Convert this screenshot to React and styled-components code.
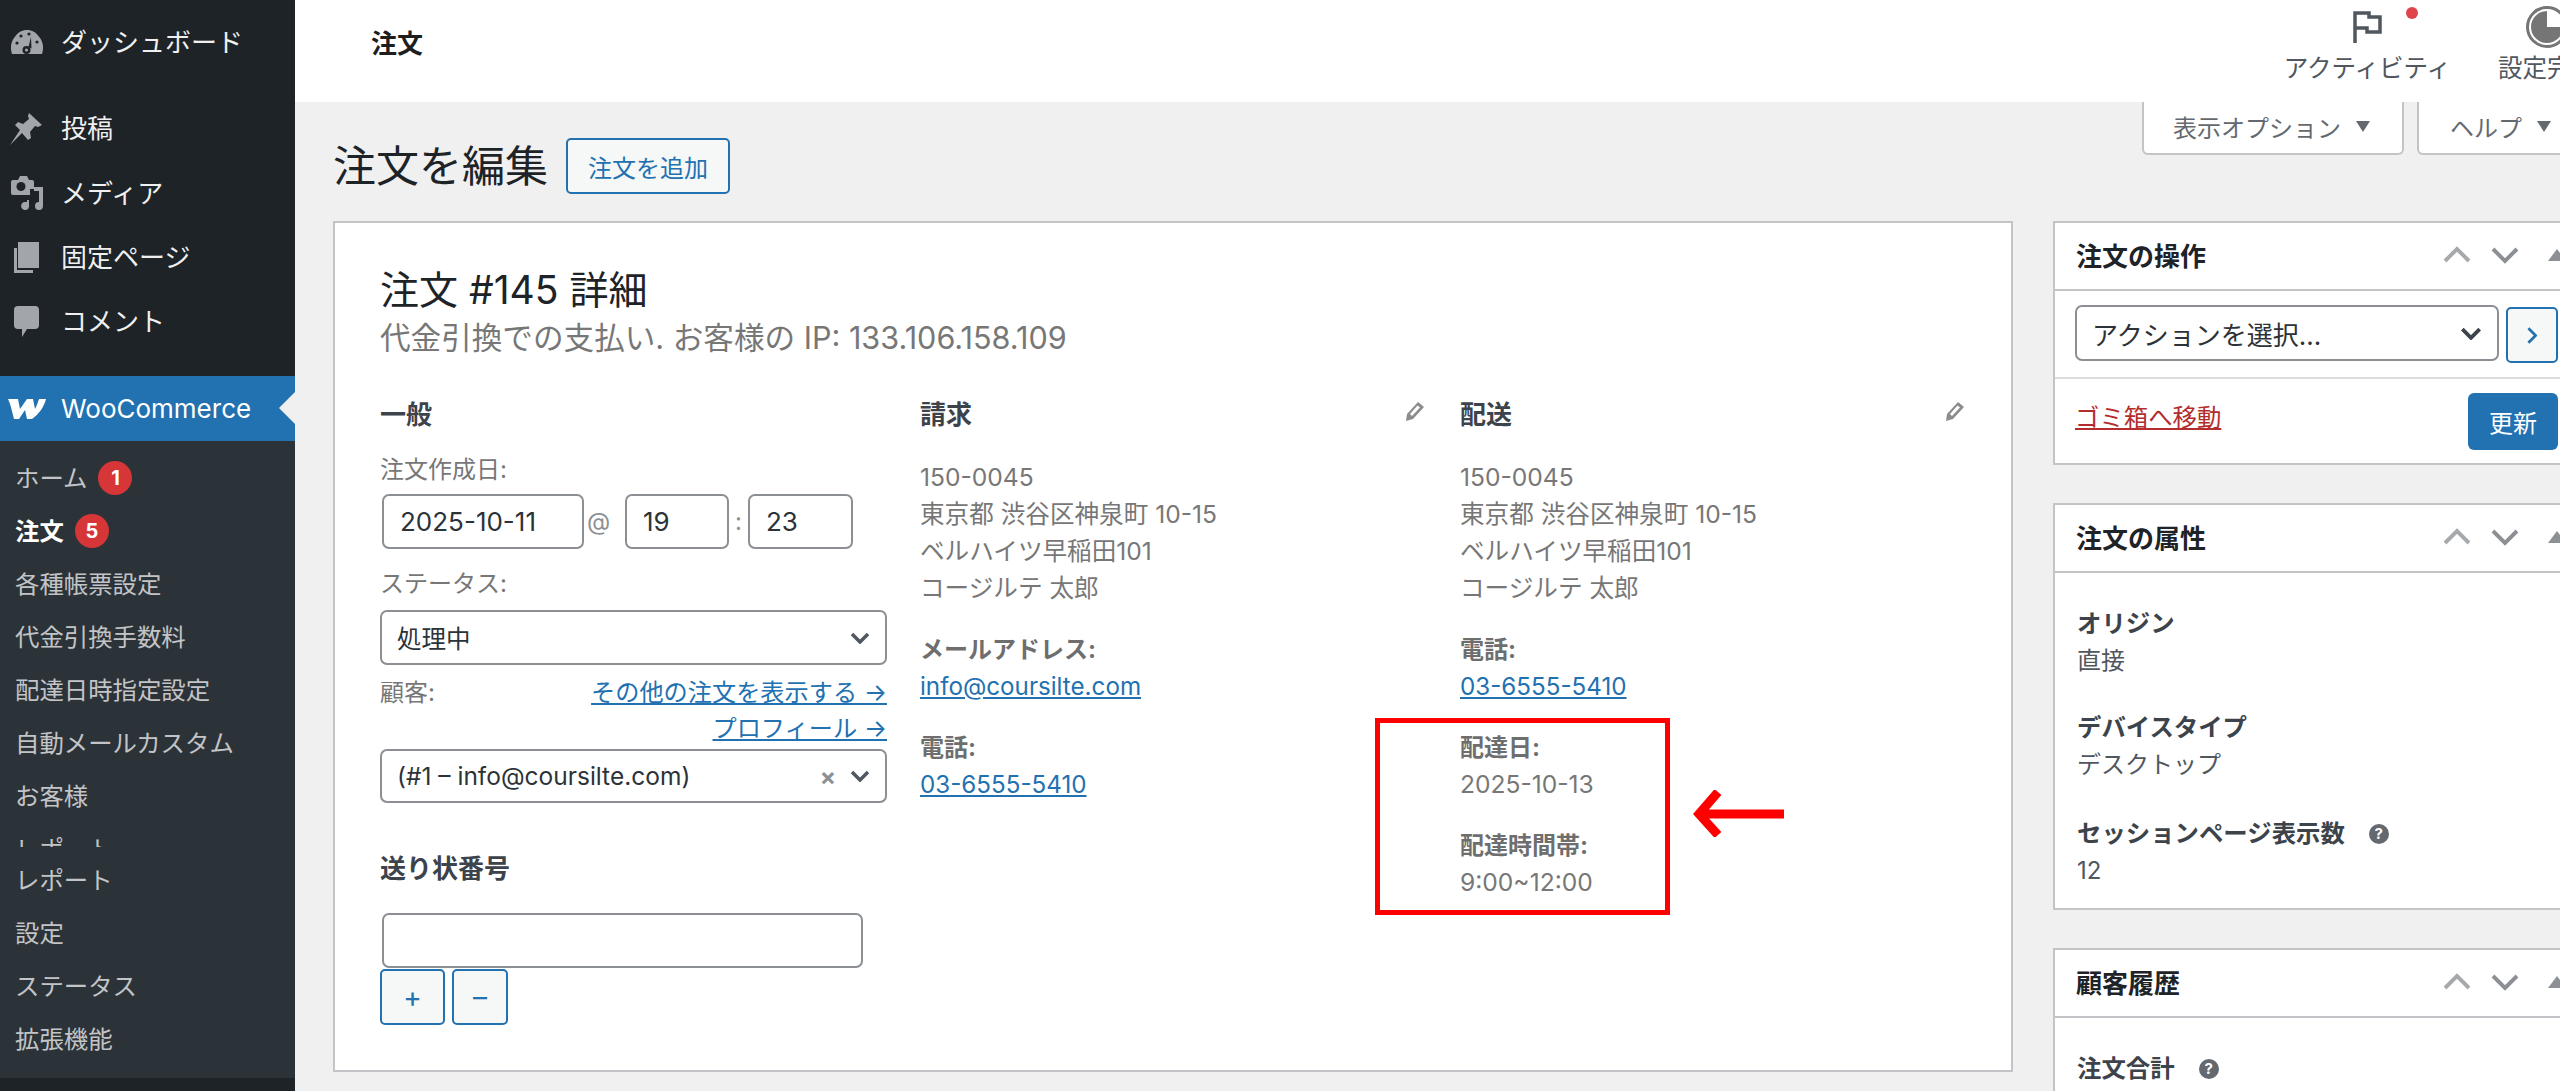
import React from 'react';
import styled, { createGlobalStyle } from 'styled-components';

const GlobalStyle = createGlobalStyle`
  html, body {
    margin: 0;
    padding: 0;
    background: #f0f0f1;
    overflow: hidden;
  }
  body, input, button {
    font-family: Inter, "Noto Sans CJK JP", sans-serif;
  }
  * { box-sizing: border-box; }
`;

const Page = styled.div`
  display: flex;
  width: 2560px;
  height: 1091px;
  overflow: hidden;
  background: #f0f0f1;
`;

/* ---------- admin menu ---------- */
const Sidebar = styled.nav`
  flex: 0 0 295px;
  display: flex;
  flex-direction: column;
  padding-top: 10px;
  background: #1d2327;
`;

const MenuRow = styled.div`
  position: relative;
  display: flex;
  align-items: center;
  flex: 0 0 64.3px;
  margin-bottom: ${({ $gap }) => $gap || 0}px;
  font-size: 26px;
  color: ${({ $active }) => ($active ? '#fff' : '#f0f0f1')};
  background: ${({ $active }) => ($active ? '#2271b1' : 'transparent')};

  ${({ $active }) => $active && `
    &::after {
      content: '';
      position: absolute;
      right: 0;
      top: 16px;
      border: 16px solid transparent;
      border-left: 0;
      border-right-color: #f0f0f1;
    }
  `}
`;

const MenuIcon = styled.span`
  flex: 0 0 61px;
  display: flex;
  justify-content: center;
  padding-right: 8px;
`;

const MenuLabel = styled.span`
  padding-bottom: ${({ $up }) => $up || 3}px;
`;

const SubMenu = styled.div`
  display: flex;
  flex-direction: column;
  height: 637px;
  padding-top: 11px;
  background: #2c3338;
`;

const SubRow = styled.div`
  display: flex;
  align-items: center;
  flex: 0 0 ${({ $clip }) => ($clip ? '24px' : '53px')};
  margin-bottom: ${({ $clip }) => ($clip ? '7px' : '0')};
  overflow: hidden;
  align-self: stretch;
  padding-left: 15px;
  font-size: 24.4px;
  line-height: 53px;
  font-weight: ${({ $bold }) => ($bold ? 700 : 400)};
  color: ${({ $bold }) => ($bold ? '#fff' : '#c3c4c7')};
  ${({ $clip }) => $clip && 'align-items: flex-start;'}
`;

const Badge = styled.span`
  display: flex;
  align-items: center;
  justify-content: center;
  width: 34px;
  height: 34px;
  margin-left: 11px;
  border-radius: 50%;
  background: #d63638;
  color: #fff;
  font-size: 20px;
  font-weight: 700;
`;

/* ---------- top bar ---------- */
const Main = styled.div`
  flex: 1;
  min-width: 0;
  display: flex;
  flex-direction: column;
`;

const TopBar = styled.header`
  flex: 0 0 102px;
  display: flex;
  justify-content: space-between;
  background: #fff;
  padding-left: 76px;
`;

const PageName = styled.div`
  margin-top: 26px;
  font-size: 26px;
  line-height: 36px;
  font-weight: 700;
  color: #1e1e1e;
`;

const TopActions = styled.div`
  display: flex;
  gap: 47px;
  margin-right: -36px;
  padding-top: 6px;
`;

const TopAction = styled.div`
  display: flex;
  flex-direction: column;
  align-items: center;
  font-size: 24.5px;
  line-height: 36px;
  color: #50575e;
`;

const TopIcon = styled.div`
  position: relative;
  display: flex;
  align-items: center;
  justify-content: center;
  align-self: stretch;
  height: 42px;
  margin-bottom: 2px;
`;

const Dot = styled.span`
  position: absolute;
  left: 122px;
  top: 1px;
  width: 12px;
  height: 12px;
  border-radius: 50%;
  background: #e0434b;
`;

/* ---------- content ---------- */
const Content = styled.div`
  padding-left: 38px;
`;

const HeadRow = styled.div`
  display: flex;
  height: 119px;
`;

const TitleGroup = styled.div`
  display: flex;
  align-items: center;
  align-self: flex-start;
  margin-top: 36px;
  gap: 18px;
`;

const PageTitle = styled.h1`
  margin: 0;
  font-size: 43px;
  line-height: 56px;
  font-weight: 400;
  color: #1d2327;
`;

const OutlineButton = styled.button`
  display: flex;
  align-items: center;
  justify-content: center;
  width: ${({ $w }) => $w}px;
  height: ${({ $h }) => $h || 56}px;
  padding: 0;
  border: 2px solid #2271b1;
  border-radius: 5px;
  background: #f6f7f7;
  color: #2271b1;
  font-size: ${({ $size }) => $size || 24}px;
`;

const Tabs = styled.div`
  display: flex;
  align-self: flex-start;
  gap: 13px;
  margin-left: auto;
  margin-right: -10px;
`;

const Tab = styled.div`
  display: flex;
  align-items: center;
  width: ${({ $w }) => $w}px;
  height: 53px;
  padding: 0 0 3px ${({ $pad }) => $pad}px;
  gap: 15px;
  background: #fff;
  border: 2px solid #c3c4c7;
  border-top: 0;
  border-radius: 0 0 6px 6px;
  color: #646970;
  font-size: 24px;
`;

const TabCaret = styled.span`
  width: 0;
  height: 0;
  border-style: solid;
  border-width: 11px 7px 0;
  border-color: #646970 transparent transparent;
`;

const Columns = styled.div`
  display: grid;
  grid-template-columns: 1680px 540px;
  gap: 40px;
`;

const OrderCard = styled.section`
  height: 851px;
  padding: 42px 44px 0 45px;
  background: #fff;
  border: 2px solid #c3c4c7;
`;

const OrderTitle = styled.h2`
  margin: 0;
  font-size: 39px;
  line-height: 50px;
  font-weight: 400;
  color: #1d2327;
`;

const OrderMeta = styled.p`
  margin: 0;
  font-size: 30.6px;
  line-height: 46px;
  color: #777;
`;

const OrderGrid = styled.div`
  display: grid;
  grid-template-columns: repeat(3, 507px);
  gap: 33px;
  margin-top: 36px;
`;

const ColumnHead = styled.div`
  display: flex;
  justify-content: space-between;
  align-items: flex-start;
  font-size: 26px;
  line-height: 36px;
  font-weight: 700;
  color: #3c434a;
`;

const Pencil = styled.svg`
  margin: 5px 3px 0 0;
`;

const FieldLabel = styled.div`
  margin-top: ${({ $top }) => $top}px;
  font-size: 24px;
  line-height: 36px;
  color: #777;
`;

const DateRow = styled.div`
  display: flex;
  align-items: center;
  margin: 6px 0 0 2px;
  color: #8c8f94;
  font-size: 24px;
`;

const TextInput = styled.input`
  display: block;
  width: ${({ $w }) => $w}px;
  height: 55px;
  padding: 0 16px;
  border: 2px solid #8c8f94;
  border-radius: 7px;
  background: #fff;
  color: #2c3338;
  font-size: 26px;
`;

const DateSep = styled.span`
  width: ${({ $w }) => $w}px;
  padding-right: ${({ $pr }) => $pr || 0}px;
  text-align: center;
`;

const SelectBox = styled.div`
  display: flex;
  align-items: center;
  width: ${({ $w }) => ($w ? `${$w}px` : '100%')};
  height: ${({ $h }) => $h || 55}px;
  margin-top: ${({ $top }) => $top || 0}px;
  padding: 0 15px;
  gap: 14px;
  border: 2px solid #8c8f94;
  border-radius: 7px;
  background: #fff;
  color: #2c3338;
  font-size: ${({ $size }) => $size || 24.5}px;
`;

const SelectText = styled.span`
  flex: 1;
`;

const ClearMark = styled.span`
  color: #8c8f94;
  font-size: 24px;
  font-weight: 700;
`;

const CustomerRow = styled.div`
  display: flex;
  justify-content: space-between;
  margin-top: 10px;
  font-size: 24px;
  line-height: 36px;
  color: #777;
`;

const ProfileLinks = styled.div`
  display: flex;
  flex-direction: column;
  align-items: flex-end;
`;

const Link = styled.a`
  color: ${({ $danger }) => ($danger ? '#b32d2e' : '#2271b1')};
  text-decoration: underline;
  font-size: 24.2px;
  line-height: ${({ $line }) => $line || 36}px;
`;

const TrackingHead = styled.div`
  margin-top: 48px;
  font-size: 26px;
  line-height: 36px;
  font-weight: 700;
  color: #3c434a;
`;

const TrackingField = styled.div`
  margin: 26px 0 1px 2px;
`;

const ButtonRow = styled.div`
  display: flex;
  gap: 7px;
`;

const Address = styled.div`
  margin-top: 26px;
  font-size: 24.6px;
  line-height: 37px;
  color: #777;
`;

const InfoGroup = styled.div`
  margin-top: 24px;
  font-size: 24.6px;
  line-height: 37px;
  color: #777;
`;

const InfoLabel = styled.div`
  font-size: 24px;
  font-weight: 700;
  color: #6e6e6e;
`;

const Highlight = styled.div`
  position: relative;
`;

const RedBox = styled.div`
  position: absolute;
  left: -85px;
  top: -11px;
  width: 295px;
  height: 197px;
  border: 5px solid #f00;
`;

const RedArrow = styled.svg`
  position: absolute;
  left: 233px;
  top: 61px;
`;

/* ---------- side boxes ---------- */
const SideColumn = styled.aside`
  display: flex;
  flex-direction: column;
  gap: 38px;
`;

const SideBox = styled.section`
  background: #fff;
  border: 2px solid #c3c4c7;
`;

const SideHead = styled.div`
  display: flex;
  align-items: center;
  height: 68px;
  padding: 0 25px 4px 21px;
  border-bottom: 2px solid #c3c4c7;
  font-size: 26px;
  font-weight: 700;
  color: #1d2327;
`;

const HeadControls = styled.div`
  display: flex;
  align-items: center;
  margin-left: auto;
  padding-top: 2px;
`;

const ActionRow = styled.div`
  display: flex;
  gap: 7px;
  padding: 14px 0 14px 20px;
  border-bottom: 2px solid #dcdcde;
`;

const ApplyButton = styled(OutlineButton)`
  margin-top: 2px;
  background: #f6f7f7;
`;

const ActionFoot = styled.div`
  display: flex;
  justify-content: space-between;
  align-items: flex-start;
  padding: 14px 33px 13px 20px;
`;

const TrashLink = styled(Link)`
  margin-top: 6px;
  font-size: 24.4px;
`;

const UpdateButton = styled.button`
  width: 90px;
  height: 57px;
  padding: 0;
  border: 0;
  border-radius: 6px;
  background: #2271b1;
  color: #fff;
  font-size: 24px;
`;

const SideBody = styled.div`
  padding: 32px 22px 19px;
`;

const AttrLabel = styled.div`
  display: flex;
  align-items: center;
  gap: 24px;
  margin-top: ${({ $top }) => $top || 0}px;
  font-size: 24.4px;
  line-height: 37px;
  font-weight: 700;
  color: #3c434a;
`;

const AttrValue = styled.div`
  font-size: 24px;
  line-height: 37px;
  color: #50575e;
`;

const HelpTip = styled.span`
  display: flex;
  align-items: center;
  justify-content: center;
  width: 20px;
  height: 20px;
  border-radius: 50%;
  background: #646970;
  color: #fff;
  font-size: 15px;
  font-weight: 700;
`;

/* ---------- icons ---------- */
const grey = '#a2a6aa';

const DashboardIcon = () => (
  <svg width="32" height="26" viewBox="0 0 32 26">
    <path fill={grey} d="M1 25C-1 19 0 13 3 9 7 3 11 1 16 1s9 2 13 8c3 4 4 10 2 16z" />
    <g fill="#1d2327">
      <circle cx="6" cy="14" r="1.6" />
      <circle cx="10" cy="7" r="1.6" />
      <circle cx="18" cy="5" r="1.6" />
      <circle cx="26" cy="13" r="1.6" />
      <path d="M20 8l-2.500 10 3 1.500z" />
      <circle cx="15.500" cy="21" r="4" />
    </g>
    <circle cx="15.500" cy="21" r="1.600" fill={grey} />
  </svg>
);

const PinIcon = () => (
  <svg width="33" height="33" viewBox="0 0 33 33">
    <path fill={grey} d="M19 1l13 12-4 2-3-1-5 6 1 6-3 2-6-7L0 33l10-15-5-5 3-3 5 2 6-5-1-3z" />
  </svg>
);

const MediaIcon = () => (
  <svg width="34" height="35" viewBox="0 0 34 35">
    <path fill={grey} d="M3 5h5l2-4h7l2 4h3a2 2 0 0 1 2 2v7h-4v6H3a2 2 0 0 1-2-2V7a2 2 0 0 1 2-2z" />
    <circle cx="11" cy="11.500" r="4.500" fill="#1d2327" />
    <path fill={grey} d="M24 12h9v19a4 4 0 1 1-4-4V16h-5zM19 25v5a4 4 0 1 1-4-3h2v-2z" />
  </svg>
);

const PagesIcon = () => (
  <svg width="25" height="31" viewBox="0 0 25 31">
    <path fill={grey} d="M4 0h21v26H4zM0 6h3v22h16v3H0z" />
  </svg>
);

const CommentIcon = () => (
  <svg width="25" height="31" viewBox="0 0 25 31">
    <path fill={grey} d="M4 0h17a4 4 0 0 1 4 4v15a4 4 0 0 1-4 4h-8l-5 8v-8H4a4 4 0 0 1-4-4V4a4 4 0 0 1 4-4z" />
  </svg>
);

const WooIcon = () => (
  <svg width="38" height="21" viewBox="0 0 38 21">
    <path fill="#fff" d="M0 1h10l2 10L19 1h6l2 10c2-4 3-7 4-10h7c-2 8-7 15-14 20h-5l-2-9-6 9H6C4 14 3 7 0 1z" />
  </svg>
);

const FlagIcon = () => (
  <svg width="29" height="32" viewBox="0 0 29 32">
    <path fill="none" stroke="#50575e" strokeWidth="3.500" d="M2 32V2h14v4h11v15H14v-4H2" />
  </svg>
);

const ProgressIcon = () => (
  <svg width="42" height="42" viewBox="0 0 42 42">
    <circle cx="21" cy="21" r="19.500" fill="none" stroke="#757575" strokeWidth="3" />
    <path fill="#757575" d="M21 5v16h16a16 16 0 1 1-16-16z" />
  </svg>
);

const Chevron = ({ dir = 'down', color = '#50575e', w = 20, h = 12, sw = 3.5, style }) => (
  <svg width={w} height={h} viewBox="0 0 20 12" style={style}>
    <path
      fill="none"
      stroke={color}
      strokeWidth={sw}
      d={dir === 'down' ? 'M2 2l8 8 8-8' : 'M2 10l8-8 8 8'}
    />
  </svg>
);

const BoxControls = () => (
  <HeadControls>
    <Chevron dir="up" color="#a7aaad" w={30} h={18} sw={2.6} />
    <Chevron color="#8c8f94" w={30} h={18} sw={2.6} style={{ marginLeft: 18 }} />
    <svg width="18" height="12" viewBox="0 0 18 12" style={{ marginLeft: 28 }}>
      <path fill="#8c8f94" d="M9 0l9 12H0z" />
    </svg>
  </HeadControls>
);

const EditIcon = () => (
  <Pencil width="19" height="19" viewBox="0 0 19 19">
    <path fill="#8c8c8c" d="M13 0l6 5L8 17l-7 2 1-7zM12.500 3.500L5 12l2 2 8-8.500z" fillRule="evenodd" />
  </Pencil>
);

const subItems = [
  { label: 'ホーム', badge: 1 },
  { label: '注文', badge: 5, bold: true },
  { label: '各種帳票設定' },
  { label: '代金引換手数料' },
  { label: '配達日時指定設定' },
  { label: '自動メールカスタム' },
  { label: 'お客様' },
  { label: 'レポート', clip: true },
  { label: 'レポート' },
  { label: '設定' },
  { label: 'ステータス' },
  { label: '拡張機能' },
];

const addressLines = ['150-0045', '東京都 渋谷区神泉町 10-15', 'ベルハイツ早稲田101', 'コージルテ 太郎'];

const AddressBlock = () => (
  <Address>
    {addressLines.map((line) => (
      <div key={line}>{line}</div>
    ))}
  </Address>
);

export default function App() {
  return (
    <>
      <GlobalStyle />
      <Page>
        <Sidebar>
          <MenuRow $gap={22}><MenuIcon><DashboardIcon /></MenuIcon><MenuLabel>ダッシュボード</MenuLabel></MenuRow>
          <MenuRow><MenuIcon><PinIcon /></MenuIcon><MenuLabel>投稿</MenuLabel></MenuRow>
          <MenuRow><MenuIcon><MediaIcon /></MenuIcon><MenuLabel>メディア</MenuLabel></MenuRow>
          <MenuRow><MenuIcon><PagesIcon /></MenuIcon><MenuLabel>固定ページ</MenuLabel></MenuRow>
          <MenuRow $gap={23}><MenuIcon><CommentIcon /></MenuIcon><MenuLabel>コメント</MenuLabel></MenuRow>
          <MenuRow $active><MenuIcon><WooIcon /></MenuIcon><MenuLabel $up={1}>WooCommerce</MenuLabel></MenuRow>
          <SubMenu>
            {subItems.map((item, i) => (
              <SubRow key={i} $bold={item.bold} $clip={item.clip}>
                {item.label}
                {item.badge && <Badge>{item.badge}</Badge>}
              </SubRow>
            ))}
          </SubMenu>
        </Sidebar>

        <Main>
          <TopBar>
            <PageName>注文</PageName>
            <TopActions>
              <TopAction>
                <TopIcon><FlagIcon /><Dot /></TopIcon>
                アクティビティ
              </TopAction>
              <TopAction>
                <TopIcon><ProgressIcon /></TopIcon>
                設定完了
              </TopAction>
            </TopActions>
          </TopBar>

          <Content>
            <HeadRow>
              <TitleGroup>
                <PageTitle>注文を編集</PageTitle>
                <OutlineButton $w={164}>注文を追加</OutlineButton>
              </TitleGroup>
              <Tabs>
                <Tab $w={262} $pad={29}>表示オプション<TabCaret /></Tab>
                <Tab $w={153} $pad={31}>ヘルプ<TabCaret /></Tab>
              </Tabs>
            </HeadRow>

            <Columns>
              <OrderCard>
                <OrderTitle>注文 #145 詳細</OrderTitle>
                <OrderMeta>代金引換での支払い. お客様の IP: 133.106.158.109</OrderMeta>
                <OrderGrid>
                  <div>
                    <ColumnHead>一般</ColumnHead>
                    <FieldLabel $top={19}>注文作成日:</FieldLabel>
                    <DateRow>
                      <TextInput $w={202} readOnly value="2025-10-11" />
                      <DateSep $w={41} $pr={12}>@</DateSep>
                      <TextInput $w={104} readOnly value="19" />
                      <DateSep $w={19}>:</DateSep>
                      <TextInput $w={105} readOnly value="23" />
                    </DateRow>
                    <FieldLabel $top={17}>ステータス:</FieldLabel>
                    <SelectBox $top={8}>
                      <SelectText>処理中</SelectText>
                      <Chevron />
                    </SelectBox>
                    <CustomerRow>
                      <span>顧客:</span>
                      <ProfileLinks>
                        <Link>その他の注文を表示する →</Link>
                        <Link>プロフィール →</Link>
                      </ProfileLinks>
                    </CustomerRow>
                    <SelectBox $top={2} $h={54}>
                      <SelectText>(#1 – info@coursilte.com)</SelectText>
                      <ClearMark>×</ClearMark>
                      <Chevron />
                    </SelectBox>
                    <TrackingHead>送り状番号</TrackingHead>
                    <TrackingField>
                      <TextInput $w={481} readOnly value="" />
                    </TrackingField>
                    <ButtonRow>
                      <OutlineButton $w={65} $size={28}>+</OutlineButton>
                      <OutlineButton $w={56} $size={28}>–</OutlineButton>
                    </ButtonRow>
                  </div>

                  <div>
                    <ColumnHead>請求<EditIcon /></ColumnHead>
                    <AddressBlock />
                    <InfoGroup>
                      <InfoLabel>メールアドレス:</InfoLabel>
                      <Link $line={37}>info@coursilte.com</Link>
                    </InfoGroup>
                    <InfoGroup>
                      <InfoLabel>電話:</InfoLabel>
                      <Link $line={37}>03-6555-5410</Link>
                    </InfoGroup>
                  </div>

                  <div>
                    <ColumnHead>配送<EditIcon /></ColumnHead>
                    <AddressBlock />
                    <InfoGroup>
                      <InfoLabel>電話:</InfoLabel>
                      <Link $line={37}>03-6555-5410</Link>
                    </InfoGroup>
                    <Highlight>
                      <InfoGroup>
                        <InfoLabel>配達日:</InfoLabel>
                        2025-10-13
                      </InfoGroup>
                      <InfoGroup>
                        <InfoLabel>配達時間帯:</InfoLabel>
                        9:00~12:00
                      </InfoGroup>
                      <RedBox />
                      <RedArrow width="91" height="47" viewBox="0 0 91 47">
                        <path fill="none" stroke="#f00" strokeWidth="9" d="M25 2L6 24l19 21M8 24h83" />
                      </RedArrow>
                    </Highlight>
                  </div>
                </OrderGrid>
              </OrderCard>

              <SideColumn>
                <SideBox>
                  <SideHead>注文の操作<BoxControls /></SideHead>
                  <ActionRow>
                    <SelectBox $w={424} $h={56} $size={26}>
                      <SelectText>アクションを選択...</SelectText>
                      <Chevron w={22} h={13} color="#3c434a" />
                    </SelectBox>
                    <ApplyButton $w={52}>
                      <Chevron dir="down" w={18} h={11} color="#2271b1" sw={3} style={{ transform: 'rotate(-90deg)' }} />
                    </ApplyButton>
                  </ActionRow>
                  <ActionFoot>
                    <TrashLink $danger>ゴミ箱へ移動</TrashLink>
                    <UpdateButton>更新</UpdateButton>
                  </ActionFoot>
                </SideBox>

                <SideBox>
                  <SideHead>注文の属性<BoxControls /></SideHead>
                  <SideBody>
                    <AttrLabel>オリジン</AttrLabel>
                    <AttrValue>直接</AttrValue>
                    <AttrLabel $top={30}>デバイスタイプ</AttrLabel>
                    <AttrValue>デスクトップ</AttrValue>
                    <AttrLabel $top={32}>セッションページ表示数<HelpTip>?</HelpTip></AttrLabel>
                    <AttrValue>12</AttrValue>
                  </SideBody>
                </SideBox>

                <SideBox>
                  <SideHead>顧客履歴<BoxControls /></SideHead>
                  <SideBody>
                    <AttrLabel>注文合計<HelpTip>?</HelpTip></AttrLabel>
                  </SideBody>
                </SideBox>
              </SideColumn>
            </Columns>
          </Content>
        </Main>
      </Page>
    </>
  );
}
